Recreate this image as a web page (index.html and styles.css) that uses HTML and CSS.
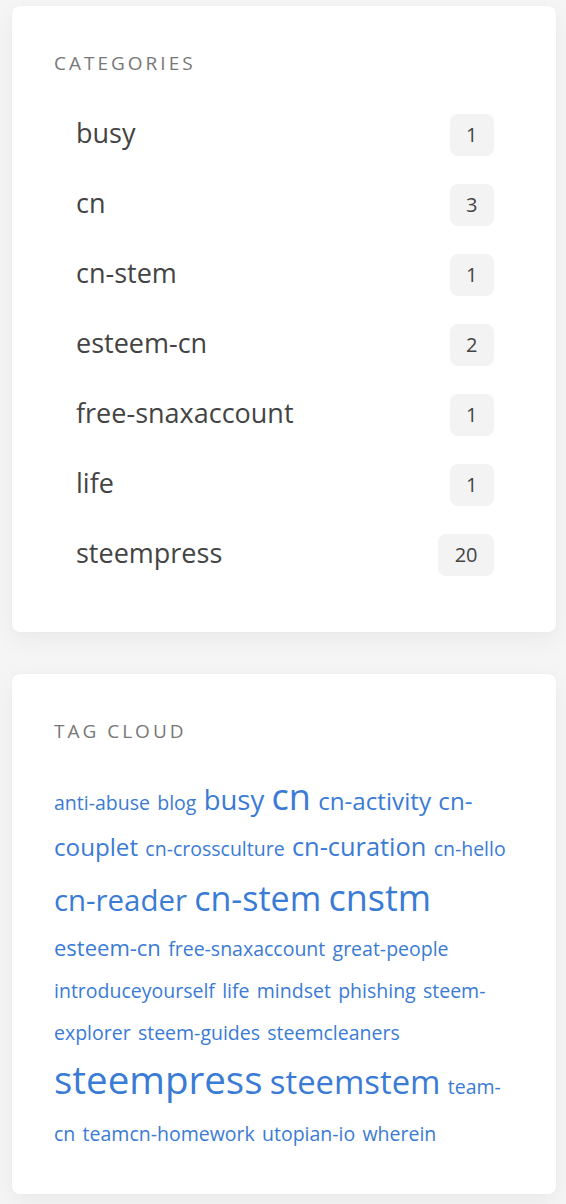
FILE: index.html
```html
<!DOCTYPE html>
<html lang="en">
<head>
<meta charset="utf-8">
<title>Sidebar</title>
<link rel="stylesheet" href="styles.css">
</head>
<body>
<aside class="sidebar">
  <section class="widget">
    <h2 class="widget-title">Categories</h2>
    <ul class="cat-list">
      <li class="cat-item"><a class="cat-name" href="#">busy</a><span class="count">1</span></li>
      <li class="cat-item"><a class="cat-name" href="#">cn</a><span class="count">3</span></li>
      <li class="cat-item"><a class="cat-name" href="#">cn-stem</a><span class="count">1</span></li>
      <li class="cat-item"><a class="cat-name" href="#">esteem-cn</a><span class="count">2</span></li>
      <li class="cat-item"><a class="cat-name" href="#">free-snaxaccount</a><span class="count">1</span></li>
      <li class="cat-item"><a class="cat-name" href="#">life</a><span class="count">1</span></li>
      <li class="cat-item"><a class="cat-name" href="#">steempress</a><span class="count">20</span></li>
    </ul>
  </section>
  <section class="widget">
    <h2 class="widget-title">Tag Cloud</h2>
    <div class="tagcloud">
      <a class="tag s1" href="#">anti-abuse</a>
      <a class="tag s1" href="#">blog</a>
      <a class="tag s5" href="#">busy</a>
      <a class="tag s8" href="#">cn</a>
      <a class="tag s3" href="#">cn-activity</a>
      <a class="tag s3" href="#">cn-couplet</a>
      <a class="tag s1" href="#">cn-crossculture</a>
      <a class="tag s4" href="#">cn-curation</a>
      <a class="tag s1" href="#">cn-hello</a>
      <a class="tag s6" href="#">cn-reader</a>
      <a class="tag s7b" href="#">cn-stem</a>
      <a class="tag s9" href="#">cnstm</a>
      <a class="tag s2" href="#">esteem-cn</a>
      <a class="tag s1" href="#">free-snaxaccount</a>
      <a class="tag s1" href="#">great-people</a>
      <a class="tag s1" href="#">introduceyourself</a>
      <a class="tag s1" href="#">life</a>
      <a class="tag s1" href="#">mindset</a>
      <a class="tag s1" href="#">phishing</a>
      <a class="tag s1" href="#">steem-explorer</a>
      <a class="tag s1" href="#">steem-guides</a>
      <a class="tag s1" href="#">steemcleaners</a>
      <a class="tag s10" href="#">steempress</a>
      <a class="tag s7" href="#">steemstem</a>
      <a class="tag s1" href="#">team-cn</a>
      <a class="tag s1" href="#">teamcn-homework</a>
      <a class="tag s1" href="#">utopian-io</a>
      <a class="tag s1" href="#">wherein</a>
    </div>
  </section>
</aside>
</body>
</html>
```

FILE: styles.css
```css
html, body {
  margin: 0;
  padding: 0;
  background: #f5f5f5;
}

body {
  font-family: "Open Sans", "Noto Sans", "DejaVu Sans", sans-serif;
  color: #444;
}

.sidebar {
  padding: 6px 10px 0 12px;
}

.widget {
  background: #fff;
  border-radius: 7px;
  padding: 42px;
  margin-bottom: 42px;
  box-shadow: 0 0 1px rgba(0, 0, 0, 0.10), 0 8px 24px rgba(0, 0, 0, 0.05);
}

.widget-title {
  margin: 0;
  font-size: 19px;
  line-height: 30px;
  font-weight: 400;
  letter-spacing: 3px;
  text-transform: uppercase;
  color: #777;
}

.cat-list {
  list-style: none;
  margin: 22px 0 0;
  padding: 0;
}

.cat-item {
  display: flex;
  align-items: center;
  justify-content: space-between;
  height: 70px;
  padding: 0 20px 0 22px;
}

.cat-name {
  font-size: 27px;
  line-height: 1;
  padding-bottom: 6px;
  color: #444;
  text-decoration: none;
}

.count {
  display: flex;
  align-items: center;
  justify-content: center;
  box-sizing: border-box;
  height: 42px;
  min-width: 44px;
  padding: 0 16.5px;
  border-radius: 8px;
  background: #f3f3f3;
  font-size: 20px;
  line-height: 1;
  color: #444;
}

.tagcloud {
  margin: 24px 0 1px;
  font-size: 28px;
  line-height: 1.5;
}

.tag {
  color: #3a7bd5;
  text-decoration: none;
}

.s1 { font-size: 19.5px; }
.s2 { font-size: 22px; }
.s3 { font-size: 24.2px; }
.s4 { font-size: 25.4px; }
.s5 { font-size: 27.5px; }
.s6 { font-size: 29.4px; }
.s7 { font-size: 32.8px; }
.s7b { font-size: 34px; }
.s8 { font-size: 36px; }
.s9 { font-size: 36px; display: inline-block; margin-top: 5px; margin-bottom: -3px; }
.s10 { font-size: 38.5px; display: inline-block; margin-top: 1px; }
```
